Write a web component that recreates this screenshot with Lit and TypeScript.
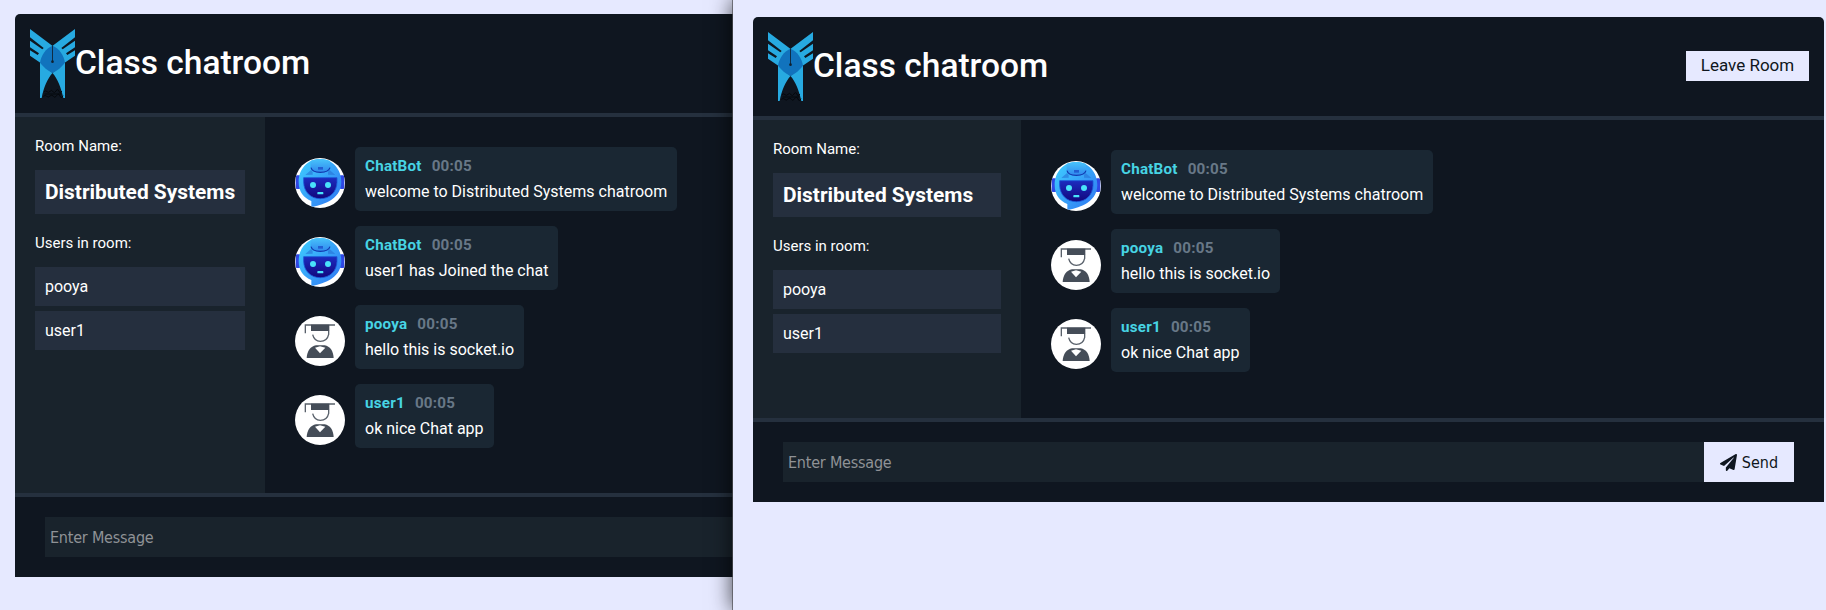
import { LitElement, html, css, svg, nothing } from "lit";
import { customElement, property } from "lit/decorators.js";

interface Message {
  from: string;
  time: string;
  text: string;
}

const logo = svg`
  <path fill="#27aae1" d="M90 87L157 137V212L122 189L90 167V151L113 165L117 160L90 142V122L127 148L131 144L90 112Z"/>
  <path fill="#27aae1" d="M225 87L158 137V212L193 189L225 167V151L202 165L198 160L225 142V122L188 148L184 144L225 112Z"/>
  <path fill="#27aae1" d="M120 186L157.500 219L195 186V294H190C183 262 173 237 157.500 219C142 237 131 262 125 294H120Z"/>
  <path fill="#1173bd" d="M157.500 137C137 146 124 164 120 188C130 201 143 212 157.500 219C172 212 185 201 195 188C191 164 178 146 157.500 137Z"/>
  <path stroke="#10202f" stroke-width="2.600" d="M157.500 137V184"/>
  <circle cx="157.500" cy="185" r="4" fill="#10202f"/>
  <path fill="none" stroke="#05080c" stroke-width="3" d="M132 275q5-5 9 0t9-1 9 1 9-2 9 1 8-1M134 282h50M130 289q6-5 10 0t10-1 10 1 10-2 10 1 9-1"/>`;

const robot = svg`
  <defs>
    <linearGradient id="head" x1="0" y1="0" x2="1" y2="1">
      <stop offset="0" stop-color="#3fd0ff"/><stop offset="1" stop-color="#2f74f2"/>
    </linearGradient>
    <linearGradient id="cap" x1="0" y1="0" x2="0" y2="1">
      <stop offset="0" stop-color="#48c4fb"/><stop offset="1" stop-color="#2f86ee"/>
    </linearGradient>
    <linearGradient id="face" x1="0" y1="0" x2="0" y2="1">
      <stop offset="0" stop-color="#1c2cc0"/><stop offset="1" stop-color="#12067c"/>
    </linearGradient>
    <clipPath id="disc"><circle cx="75" cy="75" r="75"/></clipPath>
  </defs>
  <g clip-path="url(#disc)">
    <rect width="150" height="150" fill="#fff"/>
    <rect x="2" y="52" width="14" height="41" rx="4" fill="#2f48e4"/>
    <rect x="134" y="52" width="14" height="41" rx="4" fill="#2f48e4"/>
    <path fill="url(#head)" d="M75 3C37 3 11 34 11 72C11 101 26 120 49 129V148C76 141 138 129 139 72C139 34 113 3 75 3Z"/>
    <path fill="#2672d5" d="M31 51l17-15 5 5v9ZM121 51l-17-15-5 5v9Z" opacity=".6"/>
    <path fill="url(#cap)" d="M47 8Q75 -2 105 8V29Q101 44 76 44Q51 44 47 29Z"/>
    <path fill="none" stroke="#123bb0" stroke-width="3.500" d="M48 29Q51 43 76 43Q101 43 105 29"/>
    <rect x="69" y="27" width="15" height="8" fill="#225ed2"/>
    <path fill="url(#face)" stroke="#1c58d9" stroke-width="2.500" d="M26 59H126V73C125 102 105 122 76 122C47 122 27 102 26 73Z"/>
    <circle cx="54" cy="81" r="9" fill="#49e3fb"/>
    <circle cx="99" cy="81" r="9" fill="#49e3fb"/>
    <rect x="67" y="102" width="18" height="7" rx="2" fill="#49e3fb"/>
  </g>`;

const graduate = svg`
  <circle cx="75" cy="75" r="75" fill="#fff"/>
  <path fill="none" stroke="#59616b" stroke-width="4" d="M31 52V27H120"/>
  <path fill="#454d58" d="M48 26H103V45H48Z"/>
  <path fill="none" stroke="#59616b" stroke-width="4" d="M101 44V55C98 69 88 76 76 76C64 76 56 68 53 56"/>
  <path fill="#454d58" d="M35 126C36 105 47 91 63 88H89C105 91 115 105 116 126Z"/>
  <path fill="#fff" d="M60 95L75 91L91 95L75 112Z"/>`;

const plane = svg`<path fill="currentColor" d="M476 3.2L12.500 270.600c-18.100 10.400-15.800 35.600 2.200 43.200L121 358.400l287.300-253.200c5.500-4.900 13.300 2.600 8.600 8.300L176 407v80.500c0 23.600 28.500 32.900 42.500 15.800L282 426l124.600 52.200c14.200 6 30.400-2.900 33-18.200l72-432C515 7.800 493.300-6.800 476 3.200z"/>`;

@customElement("chat-message")
class ChatMessage extends LitElement {
  @property({ attribute: false }) message!: Message;

  static styles = css`
    :host { display: flex; gap: 10px; align-items: flex-start; }
    .avatar { width: 50px; height: 50px; margin-top: 11px; flex: none; display: block; }
    .bubble { background: #1a2733; border-radius: 5px; padding: 10px; height: 44px; white-space: nowrap; }
    .meta { font-size: 15.2px; line-height: 18px; letter-spacing: 0.22px; font-weight: 700; color: #47d4e4; display: flex; gap: 10px; }
    .time { color: #687887; }
    .text { font-size: 16px; line-height: 20px; margin-top: 7px; color: #fff; }
  `;

  render() {
    const m = this.message;
    return html`
      <svg class="avatar" viewBox="0 0 150 150">${m.from === "ChatBot" ? robot : graduate}</svg>
      <div class="bubble">
        <div class="meta"><span>${m.from}</span><span class="time">${m.time}</span></div>
        <div class="text">${m.text}</div>
      </div>`;
  }
}

@customElement("chat-room")
class ChatRoom extends LitElement {
  @property({ attribute: false }) messages: Message[] = [];
  @property({ type: Boolean }) actions = false;

  static styles = css`
    :host { display: flex; flex-direction: column; background: #0f1620; border-radius: 5px 5px 0 0; color: #fff; }
    .header { display: flex; align-items: center; height: 69px; padding: 15px; border-bottom: 4px solid #25303e; }
    .logo { width: 45px; height: 69px; flex: none; }
    .title { margin: 0; font-size: 33.5px; font-weight: 500; line-height: 40px; padding-bottom: 1px; flex: 1; white-space: nowrap; }
    .leave { background: #e6e9ff; color: #0f1620; font-size: 17px; line-height: 28px; padding-bottom: 2px; margin-bottom: 1px; width: 123px; text-align: center; }
    .main { display: grid; grid-template-columns: var(--side) 1fr; flex: 1; }
    .side { background: #19232c; padding: 20px; }
    .label { font-size: 15px; line-height: 18px; margin: 0; }
    .room { background: #252f3e; font-size: 20.9px; line-height: 44px; font-weight: 700; padding-left: 10px; margin: 15px 0 20px; white-space: nowrap; }
    .users { list-style: none; padding: 0; margin: 15px 0 0; display: grid; gap: 5px; }
    .user { background: #252f3e; font-size: 16px; line-height: 39px; padding-left: 10px; }
    .messages { padding: 30px; display: flex; flex-direction: column; gap: 15px; }
    .footer { display: flex; height: 40px; padding: 20px 30px; border-top: 4px solid #25303e; font-family: "DejaVu Sans Condensed", "DejaVu Sans", sans-serif; font-stretch: condensed; font-size: 16px; line-height: 42px; letter-spacing: -0.22px; }
    :host(:not([actions])) .footer { padding-right: 0; }
    .input { background: #19232c; color: #8f9296; flex: 1; padding-left: 5px; }
    .send { background: #e6e9ff; color: #0f1620; width: 90px; display: flex; align-items: center; justify-content: center; gap: 5px; }
    .send-label { padding-top: 2px; line-height: 40px; letter-spacing: 0; }
    .plane { width: 17px; height: 17px; }
  `;

  render() {
    return html`
      <header class="header">
        <svg class="logo" viewBox="90 87 135 207">${logo}</svg>
        <h1 class="title">Class chatroom</h1>
        ${this.actions ? html`<span class="leave">Leave Room</span>` : nothing}
      </header>
      <main class="main">
        <aside class="side">
          <p class="label">Room Name:</p>
          <div class="room">Distributed Systems</div>
          <p class="label">Users in room:</p>
          <ul class="users">
            <li class="user">pooya</li>
            <li class="user">user1</li>
          </ul>
        </aside>
        <section class="messages">
          ${this.messages.map((m) => html`<chat-message .message=${m}></chat-message>`)}
        </section>
      </main>
      <footer class="footer">
        <div class="input">Enter Message</div>
        ${this.actions
          ? html`<div class="send"><svg class="plane" viewBox="0 0 512 512">${plane}</svg><span class="send-label">Send</span></div>`
          : nothing}
      </footer>`;
  }
}

const welcome: Message = { from: "ChatBot", time: "00:05", text: "welcome to Distributed Systems chatroom" };
const joined: Message = { from: "ChatBot", time: "00:05", text: "user1 has Joined the chat" };
const hello: Message = { from: "pooya", time: "00:05", text: "hello this is socket.io" };
const nice: Message = { from: "user1", time: "00:05", text: "ok nice Chat app" };

@customElement("app-root")
class AppRoot extends LitElement {
  static styles = css`
    :host { display: flex; height: 610px; overflow: hidden; background: #e6e9ff; font-family: Roboto, sans-serif; }
    .window { box-sizing: border-box; height: 610px; background: #e6e9ff; overflow: hidden; }
    .back { width: 733px; padding: 14px 0 0 15px; flex: none; }
    .window.front { flex: 1; margin-left: -1px; padding: 17px 2px 0 20px; border-left: 1px solid rgba(80, 80, 85, 0.7); background-clip: padding-box; position: relative; box-shadow: 0 0 20px rgba(0, 0, 0, 0.7); }
    .wide { height: 563px; border-top-right-radius: 0; --side: 250px; }
    .narrow { height: 485px; --side: 268px; }
  `;

  render() {
    return html`
      <div class="window back">
        <chat-room class="wide" .messages=${[welcome, joined, hello, nice]}></chat-room>
      </div>
      <div class="window front">
        <chat-room class="narrow" actions .messages=${[welcome, hello, nice]}></chat-room>
      </div>`;
  }
}
